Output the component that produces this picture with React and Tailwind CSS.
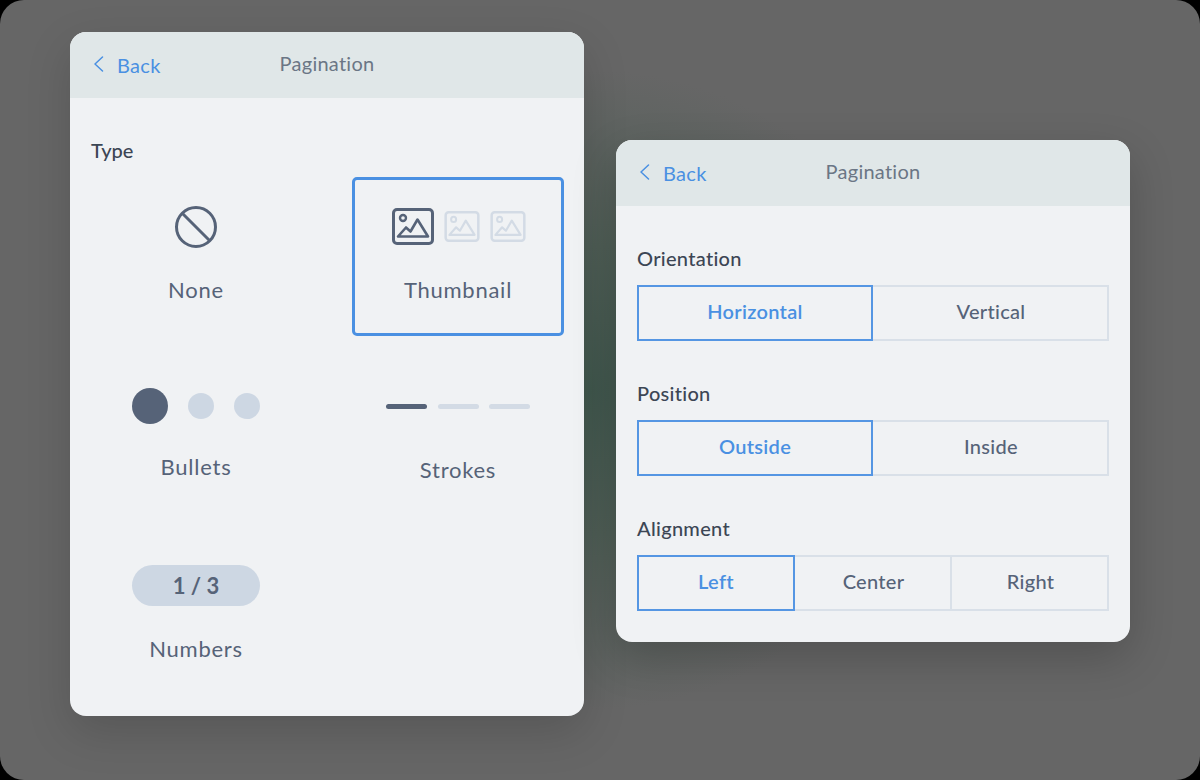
const font = "font-['Lato','Noto_Sans',sans-serif]"

function Header() {
  return (
    <div className="relative flex h-[66px] items-center justify-center bg-[#e0e7e8]">
      <div className="absolute left-[23px] top-[21px] flex items-center text-[#4a90e2]">
        <svg width="11" height="16" viewBox="0 0 11 16" fill="none" stroke="currentColor" strokeWidth="1.5" strokeLinecap="round" strokeLinejoin="round" className="-mt-[2px]">
          <path d="M9.5 1 L2 8 L9.5 15" />
        </svg>
        <span className="ml-[13px] text-[20px] leading-6 tracking-[0.3px]">Back</span>
      </div>
      <span className="-mt-1 text-[20px] leading-6 tracking-[0.25px] text-[#6b7685]">Pagination</span>
    </div>
  )
}

function PictureIcon({ className, w, h }) {
  return (
    <svg width={w} height={h} viewBox="0 0 42 37" fill="none" stroke="currentColor" strokeWidth="3" strokeLinejoin="round" className={className}>
      <rect x="1.5" y="1.5" width="39" height="34" rx="3.5" />
      <circle cx="11" cy="10" r="3" strokeWidth="2.4" />
      <path d="M6 28.5 L14 19.5 L18.5 23.5 L25.5 11.5 L36 28.5 Z" strokeWidth="2.6" />
    </svg>
  )
}

function Cell({ children, label, selected, labelClass = 'mt-0' }) {
  return (
    <div className={`flex h-[159px] flex-col items-center rounded-[5px] ${selected ? 'border-[3px] border-[#4a90e2]' : ''}`}>
      <div className={`flex w-full items-center justify-center ${selected ? 'h-[97px]' : 'h-[100px]'}`}>{children}</div>
      <span className={`text-[22px] leading-[26px] tracking-[0.75px] text-[#566378] ${labelClass}`}>{label}</span>
    </div>
  )
}

function Segment({ items, cols }) {
  return (
    <div className={`grid h-14 ${cols}`}>
      {items.map((item, i) => (
        <div
          key={item}
          className={`flex items-center justify-center border-2 pb-[5px] text-[20px] tracking-[0.3px] ${
            i === 0
              ? 'border-[#5596e3] font-semibold text-[#4a90e2]'
              : 'border-l-0 border-[#d9e0e8] pl-[2px] font-medium text-[#566378]'
          }`}
        >
          {item}
        </div>
      ))}
    </div>
  )
}

function Group({ label, items, cols }) {
  return (
    <div className="h-[135px]">
      <div className="mb-[15px] text-[20px] font-medium leading-6 tracking-[0.3px] text-[#3c4654]">{label}</div>
      <Segment items={items} cols={cols} />
    </div>
  )
}

export default function App() {
  return (
    <div className={`h-[780px] w-[1200px] overflow-hidden bg-black ${font}`}>
      <div className="flex h-full items-start gap-8 rounded-3xl bg-[#666666] bg-[radial-gradient(ellipse_340px_320px_at_590px_390px,#42594f_0%,#505f57_45%,#666666_100%)] pl-[70px] pt-8">
        <div className="h-[684px] w-[514px] overflow-hidden rounded-2xl bg-[#f0f2f4] shadow-[0_16px_45px_rgba(0,0,0,0.15)]">
          <Header />
          <div className="px-5">
            <div className="pl-px pt-[40px] text-[20px] font-medium leading-6 text-[#3c4654]">Type</div>
            <div className="mt-[15px] grid grid-cols-[212px_212px] gap-x-[50px] gap-y-5">
              <Cell label="None">
                <svg width="44" height="44" viewBox="0 0 44 44" fill="none" stroke="#566378" strokeWidth="3">
                  <circle cx="22" cy="22" r="19.5" />
                  <path d="M8.5 8.5 L35.5 35.5" />
                </svg>
              </Cell>
              <Cell label="Thumbnail" selected>
                <div className="ml-px flex items-center gap-[10px] pb-1">
                  <PictureIcon w={42} h={37} className="text-[#566378]" />
                  <PictureIcon w={36} h={31} className="text-[#d3dbe5]" />
                  <PictureIcon w={36} h={31} className="text-[#d3dbe5]" />
                </div>
              </Cell>
              <Cell label="Bullets" labelClass="-mt-[2px]">
                <div className="flex items-center gap-5">
                  <div className="size-9 rounded-full bg-[#566378]" />
                  <div className="size-[26px] rounded-full bg-[#cdd7e3]" />
                  <div className="size-[26px] rounded-full bg-[#cdd7e3]" />
                </div>
              </Cell>
              <Cell label="Strokes" labelClass="mt-[1px]">
                <div className="flex items-center gap-[10.5px]">
                  <div className="h-[5px] w-[41px] rounded-full bg-[#566378]" />
                  <div className="h-[5px] w-[41px] rounded-full bg-[#d3dbe5]" />
                  <div className="h-[5px] w-[41px] rounded-full bg-[#d3dbe5]" />
                </div>
              </Cell>
              <Cell label="Numbers" labelClass="mt-[1px]">
                <div className="flex h-[41px] w-[128px] items-center justify-center rounded-full bg-[#cdd7e3] text-[22px] font-bold text-[#566378]">
                  1 / 3
                </div>
              </Cell>
            </div>
          </div>
        </div>

        <div className="mt-[108px] h-[502px] w-[514px] overflow-hidden rounded-2xl bg-[#f0f2f4] shadow-[0_16px_45px_rgba(0,0,0,0.2)]">
          <Header />
          <div className="px-[21px] pt-[40px]">
            <Group label="Orientation" items={['Horizontal', 'Vertical']} cols="grid-cols-2" />
            <Group label="Position" items={['Outside', 'Inside']} cols="grid-cols-2" />
            <Group label="Alignment" items={['Left', 'Center', 'Right']} cols="grid-cols-[158px_157px_157px]" />
          </div>
        </div>
      </div>
    </div>
  )
}
